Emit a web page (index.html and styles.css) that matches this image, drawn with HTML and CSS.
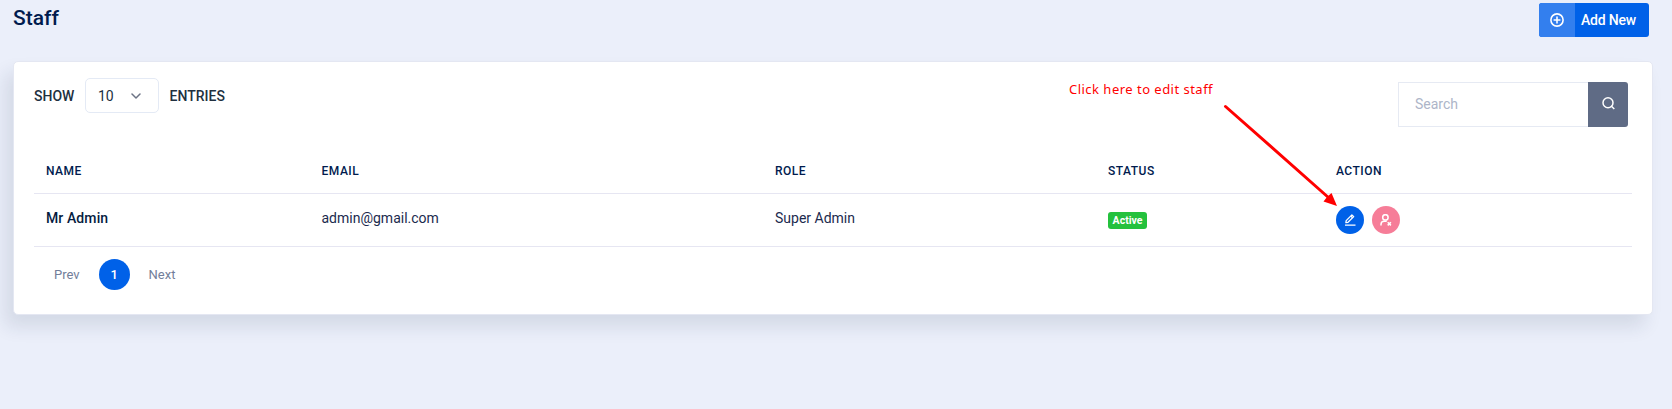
FILE: index.html
```html
<!DOCTYPE html>
<html lang="en">
<head>
<meta charset="utf-8">
<title>Staff</title>
<link rel="stylesheet" href="styles.css">
</head>
<body>
<header class="page-header">
  <h1 class="page-title">Staff</h1>
  <button class="add-button" type="button">
    <span class="add-icon"><svg width="14" height="14" viewBox="0 0 14 14" fill="none" stroke="currentColor" stroke-width="1.6"><circle cx="7" cy="7" r="6.1"/><path d="M7 3.6v6.8M3.6 7h6.8"/></svg></span>
    <span class="add-label">Add New</span>
  </button>
</header>
<main class="card">
  <div class="toolbar">
    <div class="length">
      <span>SHOW</span>
      <span class="select">10<svg width="10" height="6" viewBox="0 0 10 6" fill="none" stroke="#6c7385" stroke-width="1.5" stroke-linecap="round" stroke-linejoin="round"><path d="M1 1l4 4 4-4"/></svg></span>
      <span>ENTRIES</span>
    </div>
    <div class="search">
      <input class="search-input" type="text" placeholder="Search" aria-label="Search">
      <button class="search-button" type="button" aria-label="Search"><svg width="13" height="13" viewBox="0 0 13 13" fill="none" stroke="currentColor" stroke-width="1.5"><circle cx="6" cy="5.8" r="5"/><path d="M9.2 9l3.1 3"/></svg></button>
    </div>
  </div>
  <table class="staff-table">
    <colgroup><col class="col-name"><col class="col-email"><col class="col-role"><col class="col-status"><col></colgroup>
    <thead><tr><th>NAME</th><th>EMAIL</th><th>ROLE</th><th>STATUS</th><th>ACTION</th></tr></thead>
    <tbody><tr>
      <td class="name">Mr Admin</td>
      <td>admin@gmail.com</td>
      <td>Super Admin</td>
      <td><span class="badge">Active</span></td>
      <td><div class="actions">
        <span class="action edit"><svg width="12" height="12" viewBox="0 0 12 12" fill="none" stroke="currentColor" stroke-width="1.3" stroke-linejoin="round"><path d="M1.9 8.6l.3-2L7.9.9l1.800 1.700L4 8.300z"/><path d="M6.800 2l1.800 1.700M1 11.200h10.500"/></svg></span>
        <span class="action ban"><svg width="12" height="12" viewBox="0 0 12 12" fill="none" stroke="currentColor" stroke-width="1.5"><circle cx="5.400" cy="3.400" r="2.700"/><path d="M1 11.500V10.400c0-2 1.300-3.100 3.200-3.100h2.500M7.700 8.200l3.200 3.200M10.900 8.200l-3.200 3.200"/></svg></span>
      </div></td>
    </tr></tbody>
  </table>
  <nav class="pager"><span>Prev</span><span class="current">1</span><span>Next</span></nav>
</main>
<div class="note">Click here to edit staff</div>
<svg class="arrow" width="120" height="110" viewBox="0 0 120 110"><path d="M5.5 6.5L109 98" stroke="#f00" stroke-width="3" stroke-linecap="round"/><path d="M117 106l-13.500-4.500 3.500-4.500 4.500-4z" fill="#f00"/></svg>
</body>
</html>
```
FILE: styles.css
```css
* { box-sizing: border-box; }
body {
  margin: 0;
  padding: 3px 19px 0 13px;
  height: 409px;
  overflow: hidden;
  background: #ebeffa;
  font: 14px/20px Roboto, sans-serif;
  color: #1b2a4e;
}
button { border: 0; padding: 0; font: inherit; }
.page-header {
  display: flex;
  justify-content: space-between;
  align-items: flex-start;
  height: 58px;
  padding-right: 4px;
}
.page-title {
  margin: 1px 0 0;
  font-size: 21px;
  line-height: 28px;
  font-weight: 500;
  color: #001b4e;
}
.add-button {
  display: flex;
  width: 110px;
  height: 34px;
  border-radius: 3px;
  overflow: hidden;
  background: #0061e8;
  color: #fff;
}
.add-icon {
  display: flex;
  align-items: center;
  justify-content: center;
  width: 36px;
  height: 34px;
  background: #337fee;
}
.add-label { padding-left: 6px; line-height: 34px; font-weight: 500; letter-spacing: -.2px; }
.card {
  height: 254px;
  padding: 16px 20px 0;
  background: #fff;
  border: 1px solid #e4e7f2;
  border-radius: 5px;
  box-shadow: -8px 12px 18px 0 rgba(25, 42, 70, .11);
}
.toolbar { display: flex; justify-content: space-between; height: 68px; }
.length {
  display: flex;
  align-items: center;
  gap: 10.6px;
  height: 35px;
  font-weight: 500;
  color: #21303f;
}
.select {
  display: flex;
  align-items: center;
  justify-content: space-between;
  width: 74px;
  height: 35px;
  padding: 0 17px 0 12px;
  border: 1px solid #e4eaf5;
  border-radius: 5px;
  font-weight: 400;
}
.search { display: flex; height: 45px; margin: 4px 4px 0 0; }
.search-input {
  width: 190px;
  padding: 0 15px 1px 16px;
  border: 1px solid #e6eaf3;
  border-right: 0;
  font: inherit;
}
.search-input::placeholder { color: #adb5c8; opacity: 1; }
.search-button {
  display: flex;
  align-items: center;
  justify-content: center;
  width: 40px;
  padding-bottom: 3px;
  border-radius: 0 3px 3px 0;
  background: #5f6b85;
  color: #fff;
}
.staff-table { width: 1598px; table-layout: fixed; border-collapse: separate; border-spacing: 0; }
.col-name { width: 275.5px; }
.col-email { width: 453.5px; }
.col-role { width: 333px; }
.col-status { width: 228px; }
.staff-table th {
  height: 48px;
  padding: 3px 12px 0;
  border-bottom: 1px solid #e6e6f2;
  text-align: left;
  font-size: 12px;
  font-weight: 500;
  letter-spacing: .5px;
  color: #001b4e;
}
.staff-table td {
  height: 53px;
  padding: 0 12px 4px;
  border-bottom: 1px solid #e6e6f2;
}
.staff-table .name { font-weight: 500; letter-spacing: .1px; color: #061c3f; }
.badge {
  display: block;
  width: 39px;
  height: 17px;
  margin-top: 4px;
  border-radius: 3px;
  background: #24c13d;
  color: #fff;
  text-align: center;
  font-size: 10.5px;
  line-height: 17px;
  font-weight: 700;
}
.actions { display: flex; gap: 8px; padding-top: 4px; }
.action {
  display: flex;
  align-items: center;
  justify-content: center;
  width: 28px;
  height: 28px;
  border-radius: 50%;
  color: #fff;
}
.edit { background: #0061e8; }
.ban { background: #f67d98; }
.pager {
  display: flex;
  align-items: center;
  gap: 19px;
  height: 31px;
  margin-top: 12px;
  padding-left: 20px;
  font-size: 13px;
  color: #727e9a;
}
.current {
  width: 31px;
  height: 31px;
  border-radius: 50%;
  background: #0061e8;
  color: #fff;
  line-height: 31px;
  text-align: center;
  font-weight: 500;
}
/* Annotation laid over the table */
.note {
  position: absolute;
  left: 1069px;
  top: 79px;
  font: 13px/20px "Noto Sans", sans-serif;
  letter-spacing: .48px;
  color: #f00;
  white-space: nowrap;
}
.arrow { position: absolute; left: 1220px; top: 100px; }
```
